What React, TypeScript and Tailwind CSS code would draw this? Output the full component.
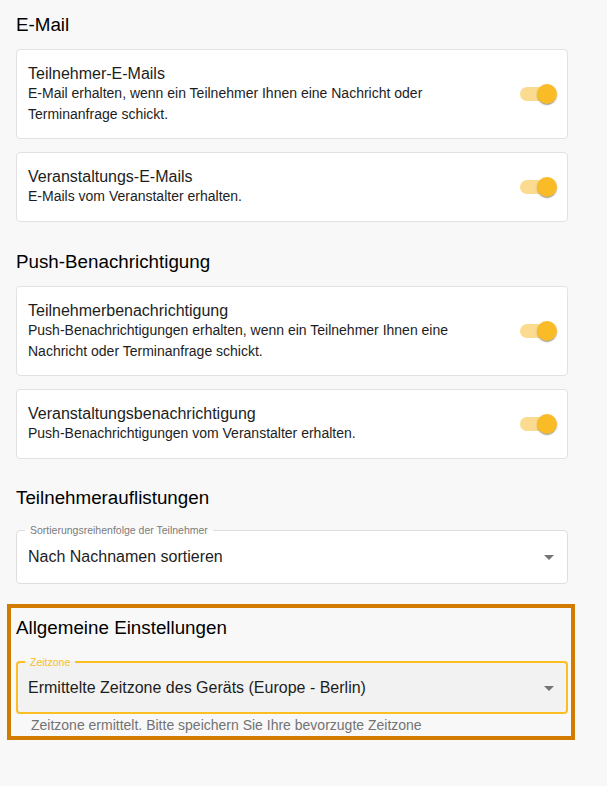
import React from "react";

const font = { fontFamily: '"Liberation Sans", Arial, Helvetica, sans-serif' };

function Toggle() {
  return (
    <div className="relative w-[37px] h-[20px] shrink-0">
      <div className="absolute left-0 top-[3px] w-[34px] h-[14px] rounded-full bg-[#fbdb8f]" />
      <div className="absolute right-0 top-0 w-[20px] h-[20px] rounded-full bg-[#f9bc27] shadow-[0_2px_1px_-1px_rgba(0,0,0,0.2),0_1px_1px_0_rgba(0,0,0,0.14),0_1px_3px_0_rgba(0,0,0,0.12)]" />
    </div>
  );
}

function Card({ title, desc }: { title: string; desc: string }) {
  return (
    <div className="flex items-center gap-[20px] bg-white border border-[#e2e2e2] rounded-[4px] pl-[11px] pr-[10px] py-[14px]">
      <div className="flex-1 min-w-0">
        <div className="text-[16px] leading-[19px] text-[#1d1d1d]">{title}</div>
        <div className="text-[14px] leading-[20.5px] text-[#1d1d1d]">{desc}</div>
      </div>
      <Toggle />
    </div>
  );
}

function Heading({ children, className = "" }: { children: React.ReactNode; className?: string }) {
  return <div className={`text-[18.8px] leading-[24px] text-black ${className}`}>{children}</div>;
}

function Arrow() {
  return (
    <svg width="24" height="24" viewBox="0 0 24 24" className="shrink-0">
      <path d="M7 10l5 5 5-5z" fill="#757575" />
    </svg>
  );
}

export default function App() {
  return (
    <div style={font} className="min-h-[786px] bg-[#f8f8f8] pt-[12.5px]">
      <div className="pl-[16px] w-[568px]">
        <Heading>E-Mail</Heading>
        <div className="mt-[12.8px] flex flex-col gap-[13px]">
          <Card
            title="Teilnehmer-E-Mails"
            desc="E-Mail erhalten, wenn ein Teilnehmer Ihnen eine Nachricht oder Terminanfrage schickt."
          />
          <Card title="Veranstaltungs-E-Mails" desc="E-Mails vom Veranstalter erhalten." />
        </div>

        <Heading className="mt-[28.2px]">Push-Benachrichtigung</Heading>
        <div className="mt-[12.2px] flex flex-col gap-[13px]">
          <Card
            title="Teilnehmerbenachrichtigung"
            desc="Push-Benachrichtigungen erhalten, wenn ein Teilnehmer Ihnen eine Nachricht oder Terminanfrage schickt."
          />
          <Card
            title="Veranstaltungsbenachrichtigung"
            desc="Push-Benachrichtigungen vom Veranstalter erhalten."
          />
        </div>

        <Heading className="mt-[27px]">Teilnehmerauflistungen</Heading>
        <fieldset className="mt-[14.5px] border border-[#dedede] rounded-[4px] bg-white">
          <legend className="ml-[8px] px-[5px] text-[10.5px] leading-[12px] text-[#7a7a7a]">
            Sortierungsreihenfolge der Teilnehmer
          </legend>
          <div className="flex items-center pl-[11px] pr-[6px] pt-[8.5px] pb-[14.6px]">
            <div className="flex-1 text-[16px] leading-[24px] text-[#1d1d1d]">Nach Nachnamen sortieren</div>
            <Arrow />
          </div>
        </fieldset>
      </div>

      <div className="mt-[20px] ml-[7px] w-[568px] border-4 border-[#d17c00] pl-[5px] pr-[3px] pt-[7.5px] pb-[1px]">
        <Heading>Allgemeine Einstellungen</Heading>
        <fieldset className="mt-[16.2px] border-2 border-[#fbbf24] rounded-[4px] bg-[#f2f2f2]">
          <legend className="ml-[7px] px-[5px] text-[10.5px] leading-[12px] text-[#fbbf24]">Zeitzone</legend>
          <div className="flex items-center pl-[10px] pr-[5px] pt-[7.7px] pb-[12.3px]">
            <div className="flex-1 text-[16px] leading-[24px] text-[#1d1d1d]">
              Ermittelte Zeitzone des Geräts (Europe - Berlin)
            </div>
            <Arrow />
          </div>
        </fieldset>
        <div className="mt-[1px] ml-[15px] text-[14px] leading-[20px] text-[#737373]">
          Zeitzone ermittelt. Bitte speichern Sie Ihre bevorzugte Zeitzone
        </div>
      </div>
    </div>
  );
}
